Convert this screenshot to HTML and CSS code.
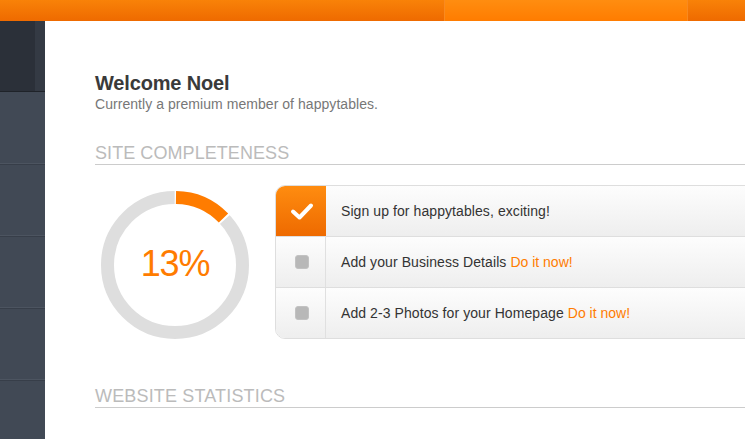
FILE: index.html
```html
<!DOCTYPE html>
<html lang="en">
<head>
<meta charset="utf-8">
<title>Dashboard</title>
<link rel="stylesheet" href="styles.css">
</head>
<body>
<header class="topbar">
  <div class="tab tab-first"></div>
  <div class="tab tab-active"></div>
  <div class="tab tab-rest"></div>
</header>
<div class="frame">
  <nav class="sidebar">
    <div class="side-head"><div class="side-head-main"></div><div class="side-head-strip"></div></div>
    <div class="side-item side-item-first"></div>
    <div class="side-item"></div>
    <div class="side-item"></div>
    <div class="side-item"></div>
    <div class="side-item side-item-last"></div>
  </nav>
  <main class="content">
    <h1 class="welcome">Welcome Noel</h1>
    <p class="member">Currently a premium member of happytables.</p>
    <h2 class="section-title">SITE COMPLETENESS</h2>
    <section class="completeness">
      <div class="ring">
        <svg class="ring-svg" width="150" height="150" viewBox="0 0 150 150" aria-hidden="true">
          <circle class="ring-track" cx="75" cy="75" r="67.5"/>
          <circle class="ring-gap" cx="75" cy="75" r="67.5" transform="rotate(-90 75 75)"/>
          <circle class="ring-value" cx="75" cy="75" r="67.5" transform="rotate(-90 75 75)"/>
        </svg>
        <span class="ring-label">13%</span>
      </div>
      <ul class="checklist">
        <li class="check-row">
          <span class="check-cell check-cell-done">
            <svg width="26" height="20" viewBox="0 0 26 20" aria-hidden="true"><path class="tick" d="M5 10.5L11.5 16.5L23 4.5"/></svg>
          </span>
          <span class="check-text">Sign up for happytables, exciting!</span>
        </li>
        <li class="check-row">
          <span class="check-cell"><span class="box"></span></span>
          <span class="check-text">Add your Business Details <a class="do-it" href="#">Do it now!</a></span>
        </li>
        <li class="check-row">
          <span class="check-cell"><span class="box"></span></span>
          <span class="check-text">Add 2-3 Photos for your Homepage <a class="do-it" href="#">Do it now!</a></span>
        </li>
      </ul>
    </section>
    <h2 class="section-title section-title-stats">WEBSITE STATISTICS</h2>
  </main>
</div>
</body>
</html>
```
FILE: styles.css
```css
* { box-sizing: border-box; }
html, body { margin: 0; height: 100%; overflow: hidden; background: #fff; }
body { font-family: "Liberation Sans", Arial, sans-serif; display: flex; flex-direction: column; }

.topbar { display: flex; height: 21px; flex: none; }
.tab { height: 21px; background: linear-gradient(#f98208, #ee6a00); }
.tab-first { width: 444px; }
.tab-active { width: 244px; background: linear-gradient(#ff8d10, #ff7c00); border-left: 1px solid #f98a20; border-right: 1px solid #f98a20; }
.tab-rest { flex: 1; }

.frame { display: flex; flex: 1; min-height: 0; }
.sidebar { width: 45px; flex: none; display: flex; flex-direction: column; background: #414955; }
.side-head { height: 71px; display: flex; background: #2b3039; border-bottom: 1px solid #1f2329; flex: none; }
.side-head-main { width: 35px; }
.side-head-strip { flex: 1; background: #343a44; }
.side-item { height: 72px; flex: none; background: #414955; border-bottom: 1px solid #373e49; box-shadow: inset 0 -1px 0 #4c5460; }
.side-item-first { height: 73px; }
.side-item-last { flex: 1; border-bottom: 0; box-shadow: none; }

.content { flex: 1; min-width: 0; padding: 51px 0 0 50px; overflow: hidden; }
.welcome { margin: 0; font-size: 20px; line-height: 23px; font-weight: 700; color: #3a3a3a; letter-spacing: -0.17px; }
.member { margin: 1px 0 0; font-size: 14px; line-height: 16px; color: #777; letter-spacing: 0.05px; }
.section-title { margin: 29px 0 0; padding-top: 2px; font-size: 18px; line-height: 21px; height: 24px; font-weight: 400; color: #bbb; border-bottom: 1px solid #ccc; letter-spacing: 0.07px; overflow: visible; }
.section-title-stats { margin-top: 44px; letter-spacing: 0.16px; }

.completeness { display: flex; margin-top: 20px; align-items: flex-start; }
.ring { position: relative; width: 150px; height: 150px; margin: 5px 25px 0 5px; flex: none; }
.ring-svg { display: block; }
.ring-track { fill: none; stroke: #dedede; stroke-width: 13; }
.ring-gap { fill: none; stroke: #fff; stroke-width: 15; stroke-dasharray: 57 367.1; stroke-dashoffset: 1; }
.ring-value { fill: none; stroke: #ff7c00; stroke-width: 13; stroke-dasharray: 53 371.1; stroke-dashoffset: -1; }
.ring-label { position: absolute; inset: 0; padding-bottom: 3px; display: flex; align-items: center; justify-content: center; font-size: 36px; letter-spacing: -1.2px; color: #ff7c00; }

.checklist { list-style: none; margin: 0; padding: 0; width: 520px; flex: none; border: 1px solid #dedede; border-radius: 10px 0 0 10px; overflow: hidden; }
.check-row { display: flex; height: 51px; background: linear-gradient(#fdfdfd, #eeeeee); border-bottom: 1px solid #dedede; }
.check-row:last-child { height: 50px; border-bottom: 0; }
.check-cell { width: 50px; flex: none; display: flex; align-items: center; justify-content: center; border-right: 1px solid #e0e0e0; }
.check-cell-done { background: linear-gradient(#ff8d10, #ee6a00); border-right: 0; margin-top: -1px; }
.tick { fill: none; stroke: #fff; stroke-width: 4; stroke-linecap: round; stroke-linejoin: round; }
.box { width: 14px; height: 14px; margin-left: 3px; background: #b8b8b8; border: 1px solid #c2c2c2; border-radius: 3px; }
.check-text { padding-left: 15px; line-height: 50px; font-size: 14px; color: #333; white-space: nowrap; letter-spacing: 0.08px; }
.do-it { color: #ff7c00; text-decoration: none; letter-spacing: 0; }
```
